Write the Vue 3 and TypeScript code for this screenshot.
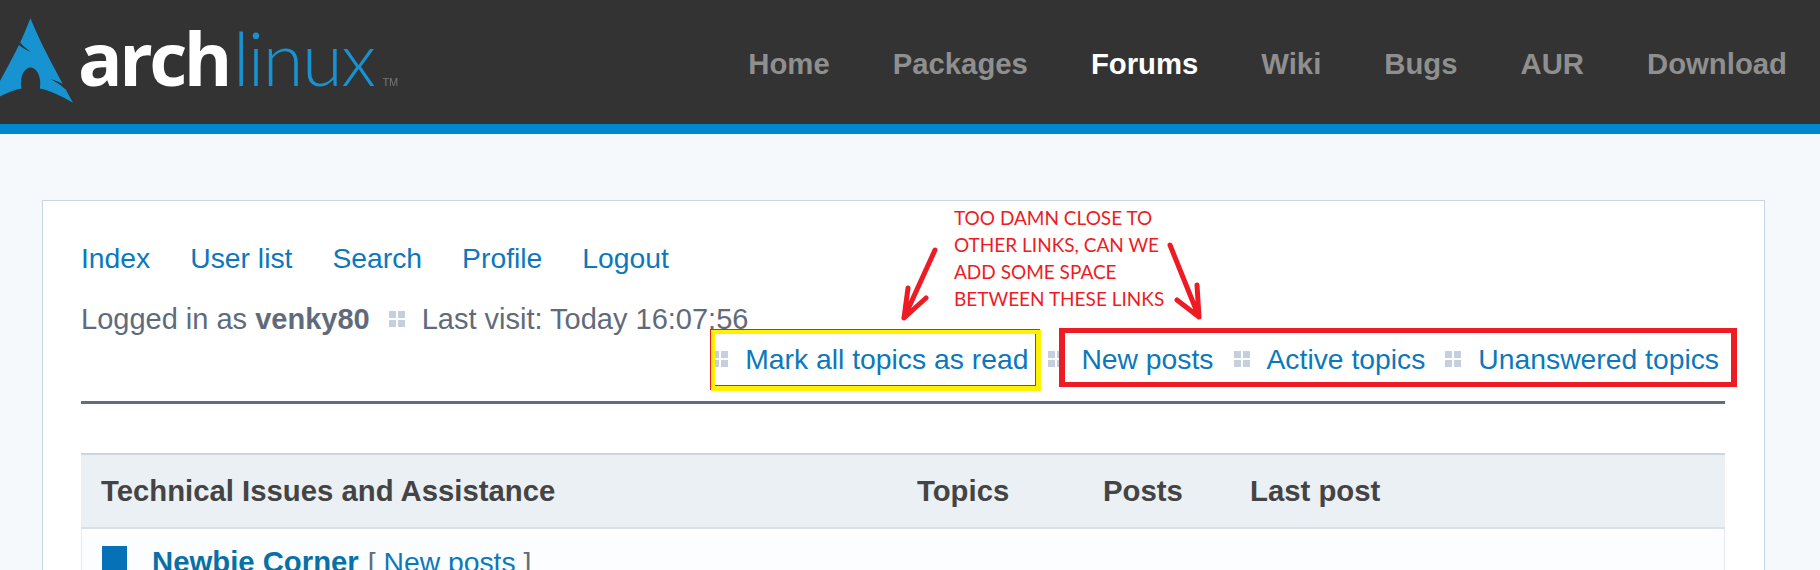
<template>
  <div class="page">
    <header class="top-bar">
      <div class="logo">
        <svg class="logo-mark" viewBox="0 0 127.2 126.8" aria-hidden="true">
          <path
            d="M63.5 0C57.8 13.9 54.4 23 48.1 36.5C51.9 40.6 56.6 45.3 64.2 50.6C56 47.2 50.4 43.8 46.2 40.3C38.2 57 25.6 80.8 0 126.8C20.1 115.2 35.7 108.1 50.3 105.3C49.7 102.6 49.3 99.7 49.4 96.7L49.4 96C49.7 83.1 56.4 73.2 64.4 73.9C72.3 74.6 78.5 85.6 78.2 98.5C78.1 100.9 77.9 103.2 77.4 105.4C91.9 108.2 107.4 115.3 127.2 126.8C123.3 119.6 119.8 113 116.4 106.7C111.1 102.6 105.5 97.2 94 91.3C101.9 93.3 107.6 95.7 112 98.4C77 33.2 74.2 24.6 63.5 0Z"
          />
        </svg>
        <span class="logo-arch">arch</span>
        <span class="logo-linux">linux</span>
        <span class="logo-tm">TM</span>
      </div>
      <nav class="main-nav">
        <a v-for="item in mainNav" :key="item" :class="{ active: item === 'Forums' }">{{ item }}</a>
      </nav>
    </header>

    <main class="content">
      <div class="box">
        <nav class="forum-nav">
          <a v-for="item in forumNav" :key="item">{{ item }}</a>
        </nav>

        <p class="status">
          <span>Logged in as <strong>venky80</strong></span>
          <i class="dots"></i>
          <span>Last visit: Today 16:07:56</span>
        </p>

        <div class="quick-links">
          <template v-for="item in quickLinks" :key="item">
            <i class="dots"></i>
            <a>{{ item }}</a>
          </template>
        </div>

        <div class="forum-table">
          <div class="table-head">
            <span class="col-title">Technical Issues and Assistance</span>
            <span class="col-topics">Topics</span>
            <span class="col-posts">Posts</span>
            <span class="col-last">Last post</span>
          </div>
          <div class="table-row">
            <i class="forum-icon"></i>
            <a class="forum-name">Newbie Corner</a>
            <span class="forum-new">[ <a>New posts</a> ]</span>
          </div>
        </div>

        <!-- screenshot annotations drawn on top of the page -->
        <div class="mark yellow"></div>
        <div class="mark red"></div>
        <p class="note">
          TOO DAMN CLOSE TO<br />OTHER LINKS, CAN WE<br />ADD SOME SPACE<br />BETWEEN THESE LINKS
        </p>
        <svg class="arrows" viewBox="0 0 310 90" aria-hidden="true">
          <path d="M32 5L1 73M5 43L1 73L23 53" />
          <path d="M267 0L296 72M294 40L296 72L274 55" />
        </svg>
      </div>
    </main>
  </div>
</template>

<script setup lang="ts">
const mainNav: string[] = ['Home', 'Packages', 'Forums', 'Wiki', 'Bugs', 'AUR', 'Download']
const forumNav: string[] = ['Index', 'User list', 'Search', 'Profile', 'Logout']
const quickLinks: string[] = ['Mark all topics as read', 'New posts', 'Active topics', 'Unanswered topics']
</script>

<style>
html,
body {
  margin: 0;
  height: 570px;
  overflow: hidden;
}
</style>

<style scoped>
.page {
  height: 570px;
  overflow: hidden;
  background: #f6f9fc;
  font-family: "Liberation Sans", Arial, sans-serif;
  font-size: 28.3px;
  color: #5f6b7c;
}
.top-bar {
  display: flex;
  justify-content: space-between;
  align-items: center;
  height: 124px;
  background: #333;
  border-bottom: 10px solid #0088cc;
}
.logo {
  display: flex;
  align-items: baseline;
  box-sizing: border-box;
  height: 124px;
  padding-top: 21px;
  filter: blur(0.5px);
}
.logo-mark {
  flex: none;
  align-self: flex-start;
  width: 85px;
  height: 85px;
  margin: -3px 0 0 -12px;
  fill: #1793d1;
}
.logo-arch {
  margin-left: 5px;
  font-family: "Open Sans", sans-serif;
  font-size: 74px;
  line-height: 74px;
  font-weight: 700;
  letter-spacing: -3.5px;
  color: #fff;
}
.logo-linux {
  margin-left: 4px;
  font-family: "Lato", sans-serif;
  font-size: 74px;
  line-height: 74px;
  font-weight: 300;
  letter-spacing: -1.5px;
  color: #1793d1;
}
.logo-tm {
  margin-left: 8px;
  font-size: 11px;
  color: #777;
}
.main-nav {
  display: flex;
  gap: 63px;
  padding: 4px 33px 0 0;
  font-size: 29.3px;
  font-weight: 700;
}
.main-nav a {
  color: #8f8f8f;
}
.main-nav a.active {
  color: #fff;
}
.content {
  padding: 66px 55px 0 42px;
}
.box {
  position: relative;
  height: 400px;
  padding: 41px 39px 0 38px;
  background: #fff;
  border: 1px solid #c8d6e4;
}
a {
  color: #0b78bd;
}
.forum-nav {
  display: flex;
  gap: 40px;
  line-height: 32px;
}
.status {
  display: flex;
  align-items: center;
  gap: 17px;
  margin: 29px 0 0;
  font-size: 29px;
  line-height: 32px;
}
.status strong {
  font-weight: 700;
}
.status .dots {
  margin-left: 2px;
}
.dots {
  flex: none;
  width: 16px;
  height: 16px;
  background:
    linear-gradient(#c5cfdd, #c5cfdd) 0 0 / 7px 7px no-repeat,
    linear-gradient(#c5cfdd, #c5cfdd) 9px 0 / 7px 7px no-repeat,
    linear-gradient(#c5cfdd, #c5cfdd) 0 9px / 7px 7px no-repeat,
    linear-gradient(#c5cfdd, #c5cfdd) 9px 9px / 7px 7px no-repeat;
}
.quick-links {
  display: flex;
  justify-content: flex-end;
  align-items: center;
  gap: 17px;
  margin-top: 8px;
  padding: 0 6px 26px 0;
  line-height: 32px;
  border-bottom: 3px solid #5f6d80;
}
.quick-links a + .dots {
  margin-left: 3px;
}
.forum-table {
  margin-top: 49px;
  background: #fcfdfe;
  border: 1px solid #e4eaf0;
}
.table-head {
  display: flex;
  align-items: center;
  height: 72px;
  padding-left: 20px;
  background: #ebf0f5;
  border-top: 2px solid #cdd5dd;
  border-bottom: 2px solid #d8e0e8;
  margin: -1px -1px 0;
  font-size: 29.3px;
  font-weight: 700;
  color: #444;
}
.col-title {
  width: 816px;
}
.col-topics {
  width: 186px;
}
.col-posts {
  width: 147px;
}
.table-row {
  display: flex;
  align-items: flex-start;
  gap: 9px;
  padding: 17px 0 0 20px;
  font-size: 28.3px;
  line-height: 32px;
}
.forum-icon {
  flex: none;
  width: 25px;
  height: 50px;
  margin-right: 16px;
  background: #0771b8;
}
.forum-name {
  font-size: 29.3px;
  font-weight: 700;
  color: #0771a6;
}
.mark {
  position: absolute;
  box-sizing: border-box;
}
.mark.yellow {
  left: 668px;
  top: 129px;
  width: 330px;
  height: 61px;
  border: solid #fff200;
  border-width: 4px 5px 5px 4px;
  box-shadow: -1px -1px 0 #ed1c24, inset -1px -1px 0 #ed1c24;
}
.mark.red {
  left: 1016px;
  top: 127px;
  width: 678px;
  height: 59px;
  border: solid #ed1c24;
  border-width: 5px 6px;
}
.note {
  position: absolute;
  left: 911px;
  top: 3px;
  margin: 0;
  font-family: "Lato", sans-serif;
  font-size: 19px;
  line-height: 27px;
  color: #ed1c24;
}
.arrows {
  position: absolute;
  left: 860px;
  top: 44px;
  width: 310px;
  height: 90px;
  overflow: visible;
  fill: none;
  stroke: #ed1c24;
  stroke-width: 5;
  stroke-linecap: round;
  stroke-linejoin: round;
}
</style>
